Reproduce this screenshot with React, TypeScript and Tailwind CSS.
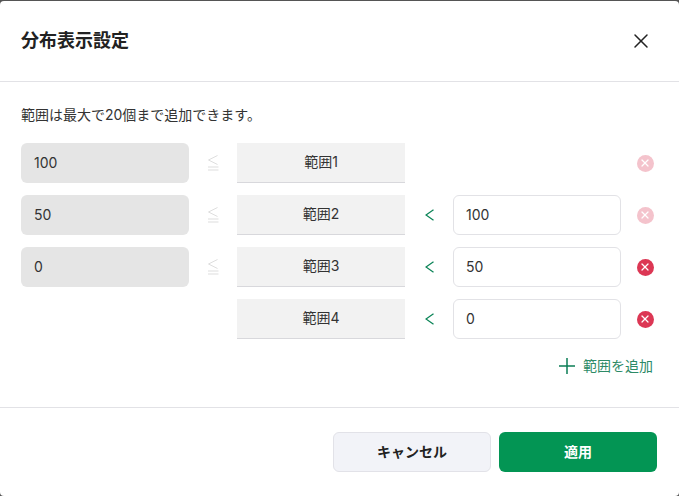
import { X } from "lucide-react";

const filas = [
  { desde: "100", nombre: "範囲1", hasta: null, activo: false },
  { desde: "50", nombre: "範囲2", hasta: "100", activo: false },
  { desde: "0", nombre: "範囲3", hasta: "50", activo: true },
  { desde: null, nombre: "範囲4", hasta: "0", activo: true },
];

function BotonEliminar({ activo }: { activo: boolean }) {
  return (
    <div className="flex items-center justify-center">
      <div
        className={
          activo
            ? "flex h-[17px] w-[17px] items-center justify-center rounded-full bg-[#dc3754]"
            : "flex h-[17px] w-[17px] items-center justify-center rounded-full bg-[#f4c3cc]"
        }
      >
        <X size={12} strokeWidth={2.4} className="text-white" />
      </div>
    </div>
  );
}

export default function App() {
  return (
    <div className="h-[496px] w-[679px] overflow-hidden bg-[#555] font-['Inter','Noto_Sans_CJK_JP',sans-serif] text-[#222]">
      <div className="mt-px h-[495px] rounded-[4px] bg-white">
        <div className="flex h-[81px] items-center justify-between border-b border-[#e2e2e6] pl-[21px] pr-[26px]">
          <h1 className="text-[18px] font-bold leading-[26px] text-[#222]">分布表示設定</h1>
          <X size={24} strokeWidth={1.5} className="text-[#222]" />
        </div>

        <div className="h-[326px] border-b border-[#e2e2e6] px-[21px] pt-[23px]">
          <p className="text-[14px] leading-[20px] text-[#333]">範囲は最大で20個まで追加できます。</p>
          <div className="mt-[18px] flex flex-col gap-3">
            {filas.map((f) => (
              <div key={f.nombre} className="grid h-10 grid-cols-[168px_48px_168px_48px_168px_48px] text-[14px]">
                {f.desde !== null ? (
                  <div className="flex items-center rounded-md bg-[#e5e5e5] pb-px pl-[13px] text-[#333]">{f.desde}</div>
                ) : (
                  <div />
                )}
                {f.desde !== null ? (
                  <div className="flex items-center justify-center">
                    <svg width="12" height="18" viewBox="0 0 12 18" fill="none" stroke="#dedede" strokeWidth="1">
                      <path d="M10.5 1.5 1.5 6l9 4.5" />
                      <path d="M1 13h10.5M1 16h10.5" strokeWidth="1.2" />
                    </svg>
                  </div>
                ) : (
                  <div />
                )}
                <div className="flex items-center justify-center border-b border-[#d8d8dc] bg-[#f2f2f2] pb-[2px] text-[#333]">
                  {f.nombre}
                </div>
                {f.hasta !== null ? (
                  <div className="flex items-center justify-center">
                    <svg width="9" height="12" viewBox="0 0 9 12" fill="none" stroke="#0b8457" strokeWidth="1.3">
                      <path d="M8.5 .8 1 6l7.5 5.2" />
                    </svg>
                  </div>
                ) : (
                  <div />
                )}
                {f.hasta !== null ? (
                  <div className="flex items-center rounded-md border border-[#e2e2e6] bg-white pb-px pl-[12px] text-[#333]">
                    {f.hasta}
                  </div>
                ) : (
                  <div />
                )}
                <BotonEliminar activo={f.activo} />
              </div>
            ))}
          </div>
          <div className="mt-[17px] flex items-center justify-end pr-[5px] text-[14px] leading-[20px] text-[#2d8a66]">
            <svg width="16" height="16" viewBox="0 0 16 16" fill="none" stroke="#0b7d55" strokeWidth="1.5" className="mr-2">
              <path d="M8 0v16M0 8h16" />
            </svg>
            範囲を追加
          </div>
        </div>

        <div className="flex justify-end gap-2 pr-[22px] pt-[24px] text-[14px] font-bold">
          <button className="h-10 w-[158px] rounded-md border border-[#e2e2e8] bg-[#f2f3f8] pb-[2px] text-[#222]">キャンセル</button>
          <button className="h-10 w-[158px] rounded-md bg-[#039554] pb-[2px] text-white">適用</button>
        </div>
      </div>
    </div>
  );
}
